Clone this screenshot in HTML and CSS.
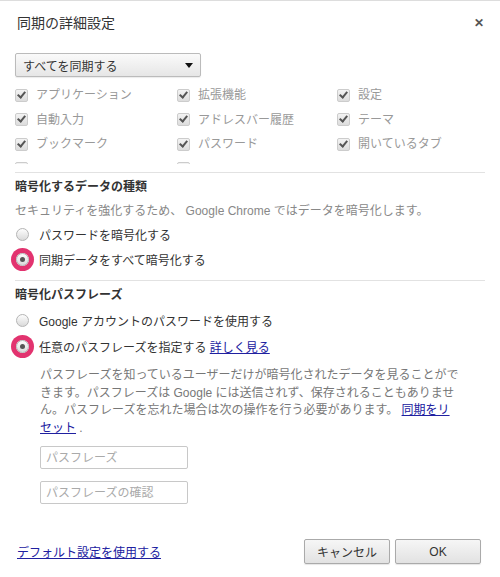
FILE: index.html
```html
<!DOCTYPE html>
<html lang="ja">
<head>
    <meta charset="UTF-8">
    <meta name="viewport" content="width=device-width, initial-scale=1.0">
    <title>同期の詳細設定</title>
    <link rel="stylesheet" href="styles.css">
</head>
<body>
    <div class="dialog">
        <div class="header">
            <h1>同期の詳細設定</h1>
            <span class="close">&#x2715;</span>
        </div>

        <div class="select">
            <span>すべてを同期する</span>
            <span class="arrow"></span>
        </div>

        <div class="datatypes">
            <div class="grid">
                <label class="check"><span class="box"></span>アプリケーション</label>
                <label class="check"><span class="box"></span>拡張機能</label>
                <label class="check"><span class="box"></span>設定</label>
                <label class="check"><span class="box"></span>自動入力</label>
                <label class="check"><span class="box"></span>アドレスバー履歴</label>
                <label class="check"><span class="box"></span>テーマ</label>
                <label class="check"><span class="box"></span>ブックマーク</label>
                <label class="check"><span class="box"></span>パスワード</label>
                <label class="check"><span class="box"></span>開いているタブ</label>
                <label class="check"><span class="box"></span></label>
                <label class="check"><span class="box"></span></label>
            </div>
        </div>

        <div class="section first">
            <h3>暗号化するデータの種類</h3>
            <p class="desc">セキュリティを強化するため、 Google Chrome ではデータを暗号化します。</p>
            <label class="radio"><span class="dot"></span>パスワードを暗号化する</label>
            <label class="radio on"><span class="dot"></span>同期データをすべて暗号化する</label>
        </div>

        <div class="section second">
            <h3>暗号化パスフレーズ</h3>
            <label class="radio"><span class="dot"></span>Google アカウントのパスワードを使用する</label>
            <label class="radio on"><span class="dot"></span>任意のパスフレーズを指定する&nbsp;<a href="#">詳しく見る</a></label>
            <div class="passphrase">
                <p>パスフレーズを知っているユーザーだけが暗号化されたデータを見ることができます。パスフレーズは Google には送信されず、保存されることもありません。パスフレーズを忘れた場合は次の操作を行う必要があります。 <a href="#">同期をリセット</a> .</p>
                <input type="password" placeholder="パスフレーズ">
                <input type="password" placeholder="パスフレーズの確認">
            </div>
        </div>

        <div class="footer">
            <a href="#">デフォルト設定を使用する</a>
            <div class="buttons">
                <button>キャンセル</button>
                <button>OK</button>
            </div>
        </div>
    </div>
</body>
</html>
```

FILE: styles.css
```css
body {
    margin: 0;
    background: #fff;
    font-family: "Liberation Sans", "Noto Sans CJK JP", sans-serif;
    font-size: 12px;
    color: #333;
}
.dialog {
    height: 576px;
    border-top: 1px solid #ddd;
    padding: 0 15px;
}
.header {
    display: flex;
    justify-content: space-between;
    align-items: center;
    padding-top: 11px;
    height: 21px;
}
.header h1 {
    margin: 0 0 0 2px;
    font-size: 14px;
    font-weight: normal;
    line-height: 20px;
    color: #333;
}
.close {
    font-size: 12px;
    font-weight: bold;
    color: #555;
    margin-right: 1px;
}
.select {
    margin-top: 20px;
    height: 22px;
    border: 1px solid #bbb;
    border-radius: 2px;
    background: linear-gradient(#fafafa, #e6e6e6);
    box-shadow: 0 1px 1px rgba(0,0,0,0.08);
    display: flex;
    align-items: center;
    justify-content: space-between;
    padding: 0 0 0 7px;
    width: 177px;
    font-size: 12px;
    color: #333;
}
.arrow {
    width: 0;
    height: 0;
    border-left: 4px solid transparent;
    border-right: 4px solid transparent;
    border-top: 5px solid #111;
    margin-right: 7px;
}
.datatypes {
    margin-top: 6px;
    height: 81px;
    overflow: hidden;
    margin-bottom: 8px;
}
.grid {
    display: grid;
    grid-template-columns: 162px 160px auto;
    grid-auto-rows: 24.5px;
}
.check {
    display: flex;
    align-items: center;
    color: #999;
    line-height: 24px;
}
.box {
    width: 11px;
    height: 11px;
    border: 1px solid #ccc;
    border-radius: 2px;
    background: linear-gradient(#f3f3f3, #dcdcdc);
    margin-right: 8px;
    position: relative;
    flex: none;
}
.box::after {
    content: "";
    position: absolute;
    left: 3px;
    top: 0;
    width: 3px;
    height: 6px;
    border: solid #555;
    border-width: 0 2px 2px 0;
    transform: rotate(40deg);
}
.section h3 {
    margin: 0;
    font-size: 12px;
    font-weight: bold;
    line-height: 20px;
    color: #333;
}
.section.first {
    border-top: 1px solid #e2e2e2;
    padding-top: 4px;
    padding-bottom: 10px;
    border-bottom: 1px solid #e2e2e2;
}
.section.second {
    padding-top: 4px;
}
.desc {
    margin: 4px 0 0 0;
    line-height: 20px;
    color: #888;
}
.radio {
    display: flex;
    align-items: center;
    height: 22px;
    margin-top: 3px;
    color: #333;
}
.first .radio:first-of-type {
    margin-top: 2px;
}
.second .radio {
    margin-top: 4px;
}
.dot {
    width: 11px;
    height: 11px;
    border: 1px solid #b5b5b5;
    border-radius: 50%;
    background: linear-gradient(#fdfdfd, #dadada);
    margin: 0 10px 0 1px;
    flex: none;
    position: relative;
}
.radio.on .dot {
    box-shadow: 0 0 0 5px #e2336f;
}
.radio.on .dot::after {
    content: "";
    position: absolute;
    left: 3px;
    top: 3px;
    width: 5px;
    height: 5px;
    border-radius: 50%;
    background: #555;
}
a {
    color: #2020a0;
}
.passphrase {
    padding-left: 25px;
}
.passphrase p {
    margin: 10px 0 0 0;
    width: 421px;
    line-height: 17.6px;
    color: #777;
}
.passphrase input {
    display: block;
    width: 148px;
    height: 23px;
    box-sizing: border-box;
    border: 1px solid #c8c8c8;
    border-radius: 2px;
    padding: 0 5px;
    font-family: inherit;
    font-size: 12px;
    margin-top: 9px;
}
.passphrase input + input {
    margin-top: 12px;
}
.passphrase input::placeholder {
    color: #aaa;
}
.footer {
    display: flex;
    justify-content: space-between;
    align-items: center;
    margin-top: 35px;
    padding-right: 4px;
}
.footer a {
    margin-left: 2px;
}
.buttons {
    display: flex;
    gap: 5px;
}
button {
    width: 86px;
    height: 25px;
    border: 1px solid #aaa;
    border-radius: 2px;
    background: linear-gradient(#f6f6f6, #e2e2e2);
    box-shadow: 0 1px 1px rgba(0,0,0,0.1);
    font-family: inherit;
    font-size: 12px;
    color: #333;
}
```
